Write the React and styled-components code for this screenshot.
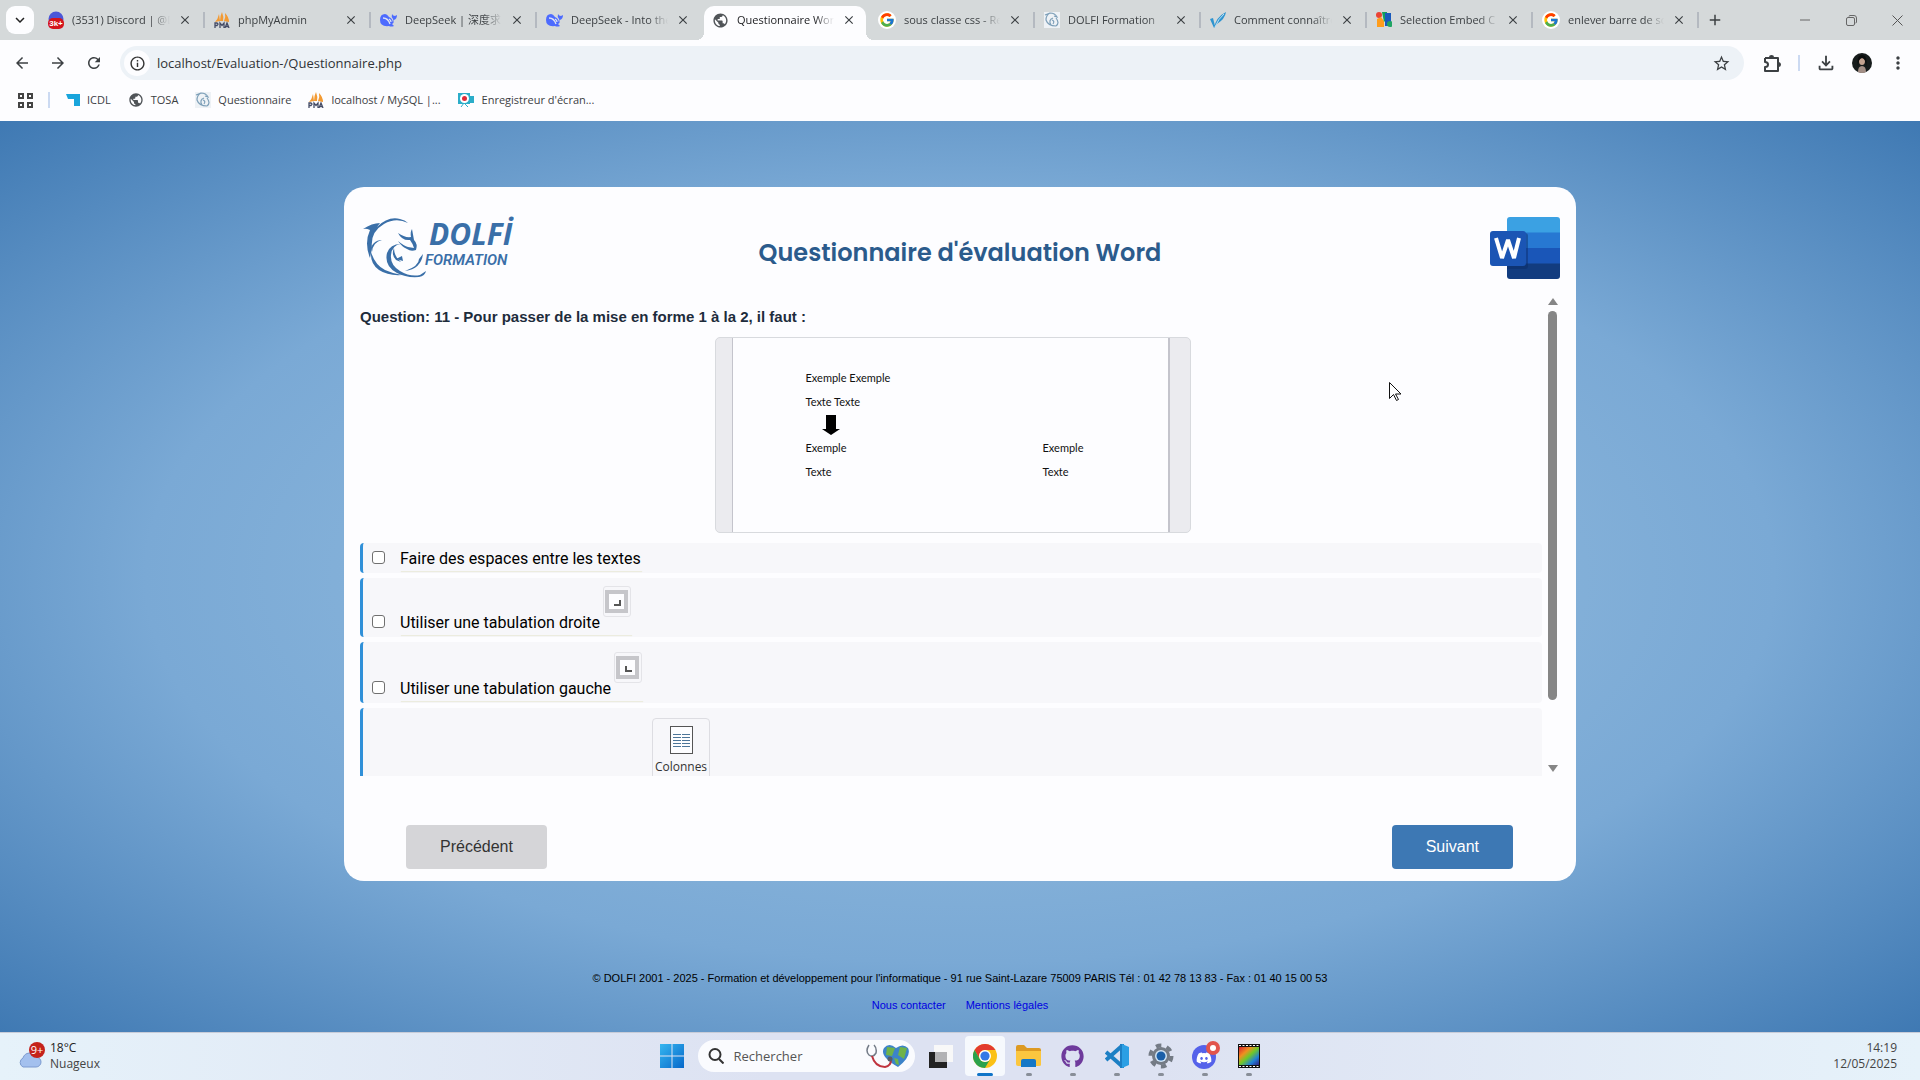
import React from 'react';
import styled, { createGlobalStyle, css } from 'styled-components';
import {
  MdArrowBack, MdArrowForward, MdRefresh, MdInfoOutline, MdStarBorder,
  MdOutlineFileDownload, MdMoreVert, MdClose, MdAdd, MdKeyboardArrowDown, MdPublic,
} from 'react-icons/md';
import { FcGoogle } from 'react-icons/fc';
import { FaDiscord, FaGithub } from 'react-icons/fa';

const ui = '"Open Sans", "Noto Sans", "Noto Sans CJK SC", sans-serif';
const arial = '"Liberation Sans", Arial, sans-serif';

const GlobalStyle = createGlobalStyle`
  * { box-sizing: border-box; }
  body { margin: 0; font-family: ${arial}; overflow: hidden; }
  button { border: 0; padding: 0; background: none; font: inherit; color: inherit; }
  a { text-decoration: none; }
  svg { display: block; flex: none; }
`;

const Shell = styled.div`
  min-height: 100vh;
  display: flex;
  flex-direction: column;
`;

/* ---------- browser ---------- */

const TabStrip = styled.div`
  height: 40px;
  display: flex;
  align-items: center;
  padding-left: 6px;
  background: #d5d9da;
  font: 11px/16px ${ui};
  color: #3c4043;
`;
const TabMenu = styled.button`
  width: 28px;
  height: 28px;
  margin-right: 4px;
  border-radius: 9px;
  background: #fdfdff;
  display: grid;
  place-items: center;
  color: #222;
`;
const Tab = styled.div`
  flex: 0 1 166px;
  min-width: 0;
  height: 40px;
  padding-top: 6px;
  display: flex;
  align-items: stretch;
`;
const TabBody = styled.div`
  position: relative;
  flex: 1;
  min-width: 0;
  display: flex;
  align-items: center;
  gap: 8px;
  margin: 0 2px;
  padding: 0 10px 6px 8px;
  ${p => p.$active && css`
    background: #fdfdff;
    border-radius: 10px 10px 0 0;
    color: #202124;
    &::before, &::after {
      content: '';
      position: absolute;
      bottom: 0;
      width: 8px;
      height: 8px;
    }
    &::before { left: -8px; background: radial-gradient(circle at 0 0, transparent 8px, #fdfdff 8px); }
    &::after { right: -8px; background: radial-gradient(circle at 100% 0, transparent 8px, #fdfdff 8px); }
  `}
`;
const TabTitle = styled.span`
  flex: 1;
  min-width: 0;
  overflow: hidden;
  white-space: nowrap;
  mask-image: linear-gradient(90deg, #000 80%, transparent 100%);
`;
const TabSeparator = styled.i`
  width: 2px;
  height: 16px;
  margin: 6px -1px 0;
  background: ${p => (p.$hidden ? 'transparent' : '#b4b9c0')};
`;
const IconButton = styled.button`
  display: grid;
  place-items: center;
  color: #3c4043;
`;
const NewTab = styled(IconButton)`
  width: 28px;
  height: 28px;
  margin-left: 3px;
`;
const WindowControls = styled.div`
  margin-left: auto;
  display: flex;
`;
const WindowButton = styled(IconButton)`
  width: 46px;
  height: 40px;
`;

const Toolbar = styled.div`
  height: 46px;
  display: flex;
  align-items: center;
  padding: 0 8px 0 10px;
  background: #fdfdff;
`;
const NavButtons = styled.div`
  display: flex;
  gap: 12px;
  padding: 0 14px 0 0;
  button { width: 24px; height: 28px; }
`;
const Omnibox = styled.label`
  flex: 1;
  height: 34px;
  margin-right: 14px;
  padding: 0 13px 0 4px;
  border-radius: 17px;
  background: #edf2f7;
  display: flex;
  align-items: center;
  gap: 7px;
`;
const SiteInfo = styled.span`
  width: 26px;
  height: 26px;
  border-radius: 50%;
  background: #fdfdff;
  display: grid;
  place-items: center;
  color: #333;
`;
const Address = styled.input`
  flex: 1;
  min-width: 0;
  border: 0;
  padding: 0;
  outline: 0;
  background: transparent;
  font: 13px/20px ${ui};
  color: #303236;
`;
const ToolbarActions = styled.div`
  display: flex;
  align-items: center;
  button { width: 28px; height: 28px; }
`;
const Rule = styled.i`
  width: 2px;
  height: 16px;
  background: #ccdaf2;
  margin: ${p => p.$margin || '0'};
`;
const ProfileButton = styled(IconButton)`
  margin: 0 8px;
`;
const BookmarkBar = styled.nav`
  height: 35px;
  display: flex;
  align-items: center;
  padding: 0 18px 7px;
  background: #fdfdff;
  font: 11px/16px ${ui};
`;
const Bookmarks = styled.div`
  display: flex;
  gap: 17px;
`;
const Bookmark = styled.a`
  display: flex;
  align-items: center;
  gap: 7px;
  color: #3c4043;
`;

/* ---------- questionnaire ---------- */

const Page = styled.main`
  flex: 1;
  display: flex;
  flex-direction: column;
  align-items: center;
  padding: 66px 24px 19px;
  background: radial-gradient(ellipse farthest-corner at center,
    #9cc3e2 0%, #7aa9d5 60%, #3f79b3 100%);
`;
const Card = styled.section`
  position: relative;
  width: 100%;
  max-width: 1232px;
  padding: 16px 16px 12px;
  border-radius: 20px;
  background: #fdfdff;
`;
const CardHeader = styled.header`
  display: grid;
  grid-template-columns: 1fr auto 1fr;
  align-items: center;
  height: 90px;
`;
const Title = styled.h1`
  margin: 10px 0 0;
  font: 600 24px/36px Poppins, Inter, sans-serif;
  color: #2b5b8c;
`;
const WordSlot = styled.div`
  justify-self: end;
`;
const ScrollArea = styled.div`
  display: flex;
  height: 483px;
  overflow: hidden;
`;
const ScrollContent = styled.div`
  flex: 1;
  min-width: 0;
  padding-top: 13px;
`;
const Question = styled.h2`
  margin: 0 0 9px;
  font: bold 15px/22px ${arial};
  color: #1e2c3c;
`;
const ScrollTrack = styled.div`
  width: 15px;
  display: flex;
  flex-direction: column;
  align-items: center;
  padding: 5px 0 4px;
`;
const Thumb = styled.i`
  width: 9px;
  height: 389px;
  margin-top: 6px;
  border-radius: 5px;
  background: #868686;
`;
const ScrollArrow = styled.i`
  border: 5px solid transparent;
  border-top: ${p => (p.$down ? '7px solid #868686' : '0')};
  border-bottom: ${p => (p.$down ? '0' : '7px solid #868686')};
  margin-top: ${p => (p.$down ? 'auto' : '0')};
`;
const Figure = styled.figure`
  width: 476px;
  height: 196px;
  margin: 0 auto 10px;
  padding: 0 20px 0 16px;
  border: 1px solid #d8dade;
  border-radius: 5px;
  background: #ebebef;
`;
const Sheet = styled.div`
  height: 100%;
  padding: 28px 70px 0 73px;
  border: solid #c4c4cc;
  border-width: 0 2px 0 1px;
  background: #fdfdff;
  font: 11px/24px Lato, sans-serif;
  color: #111;
`;
const SheetLine = styled.div`
  display: grid;
  grid-template-columns: 237px 1fr;
  height: ${p => (p.$arrow ? 22 : 24)}px;
  ${p => p.$arrow && 'padding-left: 16px; align-items: center;'}
`;
const Options = styled.ul`
  list-style: none;
  margin: 0 3px 0 0;
  padding: 0;
  display: grid;
  gap: 5px;
`;
const Option = styled.li`
  height: ${p => p.$height}px;
  padding: 0 0 2px 9px;
  display: flex;
  align-items: flex-end;
  border-left: 3px solid #3090d8;
  border-radius: 4px;
  background: #f7f7fa;
  font: 16px/24px Roboto, sans-serif;
  color: #000;
`;
const Check = styled.input`
  appearance: none;
  width: 13px;
  height: 13px;
  margin: 0 15px 7px 0;
  border: 1px solid #707070;
  border-radius: 3px;
  background: #fff;
`;
const OptionLabel = styled.label`
  display: flex;
  align-items: flex-end;
  gap: 3px;
  padding-right: 2px;
  box-shadow: 0 2px 1px -1px #ececdf;
`;
const TabMark = styled.span`
  width: 28px;
  height: 31px;
  margin-bottom: 18px;
  padding: 3px 0 0 1px;
  border: 1px solid #e4e4e8;
  border-radius: 3px;
`;
const ColumnsTool = styled.div`
  align-self: flex-start;
  width: 58px;
  height: 90px;
  margin: 10px 0 0 280px;
  padding-top: 7px;
  border: 1px solid #dddde2;
  border-radius: 4px;
  display: flex;
  flex-direction: column;
  align-items: center;
  gap: 5px;
  font: 12px/16px ${ui};
  color: #333;
`;
const Actions = styled.div`
  display: flex;
  justify-content: space-between;
  padding: 49px 47px 0 46px;
`;
const Action = styled.button`
  height: 44px;
  padding: 0 34px;
  border-radius: 4px;
  font: 16px/24px ${arial};
  background: ${p => (p.$primary ? '#3d78b4' : '#d5d5d8')};
  color: ${p => (p.$primary ? '#fff' : '#333')};
`;
const Pointer = styled.svg`
  position: absolute;
  left: 1045px;
  top: 195px;
`;
const Footer = styled.footer`
  margin-top: auto;
  text-align: center;
  font: 11px/16px ${arial};
  color: #000;
`;
const FooterLinks = styled.div`
  display: flex;
  justify-content: center;
  gap: 20px;
  margin-top: 11px;
  a { color: #0000e0; }
`;

/* ---------- taskbar ---------- */

const Taskbar = styled.footer`
  height: 48px;
  display: grid;
  grid-template-columns: 1fr auto 1fr;
  align-items: center;
  padding: 0 23px 1px;
  border-top: 1px solid #c8ccd8;
  background: linear-gradient(90deg, #e6f2fa, #dde2f2 40%, #dde2f2 60%, #e6f2fa);
  font: 12px/16px ${ui};
  color: #444;
`;
const Weather = styled.div`
  display: flex;
  align-items: center;
  gap: 5px;
  margin-left: -6px;
  strong { display: block; font-weight: 400; color: #222; }
`;
const Apps = styled.div`
  display: flex;
  align-items: center;
`;
const Search = styled.label`
  width: 217px;
  height: 32px;
  margin: 0 4px 0 4px;
  padding: 0 5px 0 10px;
  border-radius: 16px;
  background: #fafbfe;
  display: flex;
  align-items: center;
  gap: 10px;
  input {
    flex: 1;
    min-width: 0;
    border: 0;
    padding: 0;
    outline: 0;
    background: transparent;
    font: 13px/20px ${ui};
    color: #555;
  }
  input::placeholder { color: #555; opacity: 1; }
`;
const AppButton = styled.button`
  position: relative;
  width: 40px;
  height: 40px;
  margin: 0 2px;
  border-radius: 4px;
  display: grid;
  place-items: center;
  background: ${p => (p.$active ? '#f6f9fd' : 'transparent')};
  &::after {
    content: '';
    position: absolute;
    bottom: 0;
    left: 50%;
    translate: -50%;
    width: ${p => (p.$active ? 16 : 6)}px;
    height: 3px;
    border-radius: 2px;
    background: ${p => (p.$active ? '#0f74c8' : p.$open ? '#888e98' : 'transparent')};
  }
`;
const Clock = styled.div`
  text-align: right;
`;

/* ---------- drawings ---------- */

const PmaIcon = () => (
  <svg width="16" height="16" viewBox="0 0 16 16">
    <path d="M1 10 Q4 7 5 2 L6 9Z M6 9 Q6 4 8 0 Q10 5 9 9Z M10 9 Q12 5 11 1 Q15 5 15 10Z" fill="#f39a32" />
    <path d="M1 16V11h2l1 1-1 1.5H1M6 16v-5l2 2.500 2-2.500V16M11 16l2-5 2 5M12 14.500h2.500" stroke="#454c66" strokeWidth="1.300" fill="none" />
  </svg>
);
const WhaleIcon = () => (
  <svg width="17" height="16" viewBox="0 0 17 16">
    <path d="M0 8Q0 2 5 2q2 0 4 3 3 1 4 5 1-1 0-3-2-2-1-5 1 2 3 2l2-1q0 4-3 5 0 3-2 4l2 2q-3 1-5 0-9 1-9-6Z" fill="#4d6bfe" />
    <path d="M3 6q5 0 7 6M9 7q2 1 2 3" stroke="#dfe4f4" strokeWidth="1.300" fill="none" />
  </svg>
);
const DiscordBadge = () => (
  <svg width="16" height="18" viewBox="0 0 16 18">
    <circle cx="8" cy="8" r="7.500" fill="#4b57d8" />
    <rect x="0" y="7" width="16" height="11" rx="5" fill="#d4141c" />
    <text x="8" y="15" textAnchor="middle" fontFamily="Liberation Sans" fontSize="8" fontWeight="700" fill="#fff">3k+</text>
  </svg>
);
const FinIcon = () => (
  <svg width="16" height="16" viewBox="0 0 16 16">
    <path d="M0 0h16v16H0z" fill="#eef2f6" />
    <path d="M1 3l5-2q-4 2-4 7 2 6 10 6M6 1q5 0 7 4l-3-1M9 6q-5 2-2 7M12 6q4 5 0 8M8 8q3 1 1 4" stroke="#7d9fb8" strokeWidth="1.200" fill="none" />
  </svg>
);
const FeatherIcon = () => (
  <svg width="16" height="16" viewBox="0 0 16 16">
    <path d="M4 16Q6 5 16 0q-1 7-9 12ZM0 7l3-1 2 8-1 2Z" fill="#2f94cf" /><path d="M5 15Q8 7 14 2" stroke="#bfe2f5" fill="none" />
  </svg>
);
const EmbedIcon = () => (
  <svg width="16" height="16" viewBox="0 0 16 16">
    <circle cx="3" cy="3" r="3" fill="#ea4335" /><path d="M1 7l4-2 3 4v6H1z" fill="#ff9d1c" />
    <path d="M6 0h5v7l-3 3z" fill="#12a05c" /><path d="M9 1h6v13H9z" fill="#185abc" /><circle cx="14" cy="12" r="3" fill="#21a563" />
  </svg>
);
const GoogleIcon = () => (
  <svg width="18" height="18" viewBox="0 0 18 18"><circle cx="9" cy="9" r="9" fill="#fff" /><g transform="translate(1 1)"><FcGoogle size={16} /></g></svg>
);
const PuzzleIcon = () => (
  <svg width="18" height="19" viewBox="0 0 18 19" fill="none" stroke="#3c4043" strokeWidth="2">
    <path d="M2 4h13v5M15 12v5H2v-4q3 0 3-2.500T2 8V4" strokeLinejoin="round" />
    <path d="M6 3q0-2 2.500-2T11 3ZM16 8q2 .500 2 2.500T16 13Z" fill="#3c4043" stroke="none" />
    <path d="M15 8v5" />
  </svg>
);
const GridIcon = () => (
  <svg width="15" height="15" viewBox="0 0 15 15" fill="none" stroke="#444" strokeWidth="2">
    <path d="M1 1h4v4H1zM10 1h4v4h-4zM1 10h4v4H1zM10 10h4v4h-4z" />
  </svg>
);
const IcdlIcon = () => (
  <svg width="14" height="14" viewBox="0 0 14 14"><path d="M0 1h14v12H8V6H2z" fill="#19a5dc" /></svg>
);
const RecorderIcon = () => (
  <svg width="17" height="16" viewBox="0 0 17 16">
    <path d="M0 1h12v11H0zM12 4h4v7h-4z" fill="#2badc9" /><path d="M3 15l3-4 4 4" stroke="#2badc9" fill="none" />
    <circle cx="6.500" cy="6.500" r="4.500" fill="#fff" /><circle cx="6.500" cy="6.500" r="2.500" fill="#e02b38" />
  </svg>
);
const Avatar = () => (
  <svg width="20" height="20" viewBox="0 0 20 20">
    <circle cx="10" cy="10" r="10" fill="#171c1c" /><ellipse cx="10" cy="8" rx="3" ry="4" fill="#c4a391" />
    <path d="M6 19q0-6 4-6t4 6q-4 2-8 0Z" fill="#a38f86" /><path d="M6 14Q4 2 10 2t4 12q0-8-4-9-4 1-4 9Z" fill="#0b0d0d" />
  </svg>
);
const MinimiseIcon = () => <svg width="10" height="10"><path d="M0 5h10" stroke="#666" /></svg>;
const RestoreIcon = () => (
  <svg width="11" height="11" fill="none" stroke="#666"><rect x=".5" y="2.500" width="8" height="8" rx="1.500" /><path d="M3 1.500q0-1 1-1h4q2.500 0 2.500 2.500v4q0 1-1 1" /></svg>
);
const CrossIcon = () => <svg width="11" height="11"><path d="M.5.5l10 10M10.500.5l-10 10" stroke="#555" /></svg>;

const DolfiLogo = () => (
  <svg width="154" height="66" viewBox="0 0 154 66" role="img" aria-label="DOLFI Formation">
    <g fill="#3a6fa8">
      <path d="M3 14Q12 8 20 8l-3 4Q28 1 40 4q5 1 8 4Q36 2 24 9 10 17 12 33l-2 10Q4 28 10 15Q6 13 3 14Z" />
      <path d="M38 18q7 5 13 4-1-5 1-8l2 11q4 4 2 10-5 2-9-1-6-3-9-8 6 5 10 6l6 1q-1-4-4-8-8 1-12-7Z" />
      <path d="M41 29q-9 1-10 11t9 16q10 6 20 4l6-4q-1 5-7 6-13 1-22-4-13-7-10-20 3-9 14-9Z" />
      <path d="M11 37q4 13 14 18 9 4 17 5-14 1-23-5T11 37Z" />
      <path d="M22 25q-9 2-10 12-2-6 2-9 3-3 8-3ZM34 33q0 9 7 14l-5-2q-5-5-2-12ZM63 39q-2 15-18 17 14-5 14-12Z" />
      <path d="M36 44l7 2-1-5Z" />
    </g>
    <g fill="#3a6fa8" fontStyle="italic">
      <text x="69" y="30" fontSize="30" fontWeight="700" fontFamily="Open Sans, sans-serif">DOLFİ</text>
      <text x="65" y="50" fontSize="15" fontWeight="600" fontFamily="Roboto, sans-serif">FORMATION</text>
    </g>
  </svg>
);
const WordLogo = () => (
  <svg width="70" height="62" viewBox="0 0 70 62" role="img" aria-label="Word">
    <defs><clipPath id="sheet"><rect x="17" width="53" height="62" rx="3" /></clipPath></defs>
    <g clipPath="url(#sheet)">
      <path d="M17 0h53v16H17z" fill="#3ba1e3" /><path d="M17 15.500h53V31H17z" fill="#2778d2" />
      <path d="M17 31h53v16H17z" fill="#1a56b8" /><path d="M17 46.500h53V62H17z" fill="#123c7f" />
      <path d="M17 16h18q3 0 3 3v30q0 3-3 3H17z" fill="#0a2a66" opacity=".45" />
    </g>
    <rect y="14" width="36" height="35" rx="3" fill="#1b55b4" />
    <path d="M6 21l6 20 6-18 6 18 5-20" fill="none" stroke="#fff" strokeWidth="4" strokeLinejoin="bevel" />
  </svg>
);
const DownArrow = () => <svg width="18" height="20"><path d="M4 0h10v14h4l-9 6-9-6h4z" fill="#000" /></svg>;
const TabStop = ({ left }) => (
  <svg width="23" height="23" viewBox="0 0 23 23">
    <rect x="2" y="2" width="19" height="19" fill="#fdfdff" stroke="#c6c6ca" strokeWidth="4" />
    <path d={left ? 'M10 10v5h6' : 'M15 10v5H9'} fill="none" stroke="#555" strokeWidth="2" />
  </svg>
);
const ColumnsIcon = () => (
  <svg width="23" height="28" viewBox="0 0 23 28">
    <rect x=".5" y=".5" width="22" height="27" fill="#fdfdff" stroke="#555" />
    <path d="M3 8.500h8M12 8.500h8M3 11.500h8M12 11.500h8M3 14.500h8M12 14.500h8M3 17.500h8M12 17.500h8M3 20.500h8M12 20.500h8" stroke="#4c7599" />
  </svg>
);

const WeatherIcon = () => (
  <svg width="28" height="28" viewBox="0 0 28 28">
    <path d="M6 25a5 5 0 0 1 0-9 7 7 0 0 1 13-1 5 5 0 0 1 0 10Z" fill="#a3c0ee" stroke="#7c9bd0" />
    <circle cx="20" cy="8" r="8" fill="#c5221b" />
    <text x="20" y="12" textAnchor="middle" fontSize="11" fontFamily="Open Sans" fill="#fff">9+</text>
  </svg>
);
const WindowsIcon = () => (
  <svg width="24" height="24"><defs><linearGradient id="win" x2="1" y2="1"><stop stopColor="#35b6f0" /><stop offset="1" stopColor="#0768ca" /></linearGradient></defs>
    <path d="M0 0h11.500v11.500H0zM12.500 0H24v11.500H12.500zM0 12.500h11.500V24H0zM12.500 12.500H24V24H12.500z" fill="url(#win)" /></svg>
);
const SearchIcon = () => (
  <svg width="16" height="16" fill="none" stroke="#333" strokeWidth="2"><circle cx="7" cy="6.500" r="5.500" /><path d="M11 11l4.500 4.500" /></svg>
);
const HealthIcon = () => (
  <svg width="44" height="26" viewBox="0 0 44 26">
    <path d="M32 24Q13 13 18 5q5-6 12 0 7-5 12 0 4 8-10 19Z" fill="#3c83c9" />
    <path d="M21 4l8 1-3 8-6-1ZM34 4l7 1-3 11-6-4ZM28 15l4 1 1 6-3-1Z" fill="#6fb34a" />
    <path d="M3 2Q-1 8 3 12q4 3 7-2 1-5-2-8" fill="none" stroke="#747c88" strokeWidth="1.500" />
    <path d="M6 13q3 11 13 11 6-1 6-7" fill="none" stroke="#c0343f" strokeWidth="2" />
    <circle cx="24" cy="16" r="2.500" fill="#555d68" />
  </svg>
);
const TaskViewIcon = () => (
  <svg width="24" height="24"><path d="M5 1h19v17H5z" fill="#f8f8f8" /><path d="M0 8h6v10h12v6H0z" fill="#222" /><path d="M6 8h12v10H6z" fill="#b2b2b4" /></svg>
);
const ChromeIcon = () => (
  <svg width="24" height="24" viewBox="0 0 24 24">
    <circle cx="12" cy="12" r="12" fill="#fbc116" />
    <path d="M1.600 6A12 12 0 0 1 22.400 6H12A6 6 0 0 0 6.800 15Z" fill="#e33b2e" />
    <path d="M1.600 6A12 12 0 0 0 12 24L17.200 15A6 6 0 0 1 6.800 15Z" fill="#2ba24c" />
    <circle cx="12" cy="12" r="6" fill="#fff" /><circle cx="12" cy="12" r="4.600" fill="#3278e6" />
  </svg>
);
const FolderIcon = () => (
  <svg width="26" height="24"><path d="M0 3q0-2 2-2h6l3 3h12q2 0 2 2v4H0z" fill="#dd9a22" /><path d="M0 7h25v14q0 1-2 1H2q-2 0-2-2z" fill="#fbc63f" /><path d="M5 17q0-2 2-2h11q2 0 2 2v6H5z" fill="#1577c6" /></svg>
);
const CodeIcon = () => (
  <svg width="24" height="24" viewBox="0 0 24 24">
    <path d="M17 0v24M18 1L1 16M18 23L1 8" stroke="#1c7fc4" strokeWidth="4" fill="none" />
    <path d="M17 0l7 3v18l-7 3Z" fill="#2b9fe4" />
  </svg>
);
const GearIcon = () => (
  <svg width="26" height="26" viewBox="0 0 26 26">
    <circle cx="13" cy="13" r="9" fill="#747b85" /><circle cx="13" cy="13" r="10.500" fill="none" stroke="#747b85" strokeWidth="4" strokeDasharray="5.500 5.500" />
    <circle cx="13" cy="13" r="6" fill="#cfe4f5" /><circle cx="13" cy="13" r="4.500" fill="#1a5fa8" />
  </svg>
);
const DiscordApp = () => (
  <svg width="30" height="30" viewBox="0 0 30 30">
    <circle cx="14" cy="16" r="12" fill="#5562ea" /><g transform="translate(6 9)"><FaDiscord size={16} color="#fff" /></g>
    <circle cx="23" cy="7" r="7" fill="#e2544c" /><circle cx="23" cy="7" r="3" fill="#fff" />
  </svg>
);
const FilmIcon = () => (
  <svg width="22" height="24"><defs><linearGradient id="film" x2="1" y2="1"><stop stopColor="#d8202c" /><stop offset=".3" stopColor="#f09020" /><stop offset=".5" stopColor="#70c828" /><stop offset=".75" stopColor="#2080d8" /><stop offset="1" stopColor="#302080" /></linearGradient></defs>
    <path d="M0 0h22v24H0z" fill="#111" /><path d="M1 3h20v18H1z" fill="url(#film)" /><path d="M1 1.500h20M1 22.500h20" stroke="#fff" strokeDasharray="2 1.500" /></svg>
);

/* ---------- data ---------- */

const tabs = [
  { title: '(3531) Discord | @Dolfi', icon: <DiscordBadge /> },
  { title: 'phpMyAdmin', icon: <PmaIcon /> },
  { title: 'DeepSeek | 深度求', icon: <WhaleIcon /> },
  { title: 'DeepSeek - Into the', icon: <WhaleIcon /> },
  { title: 'Questionnaire Word', icon: <MdPublic size={17} color="#505458" />, active: true },
  { title: 'sous classe css - Re', icon: <GoogleIcon /> },
  { title: 'DOLFI Formation', icon: <FinIcon /> },
  { title: 'Comment connaître', icon: <FeatherIcon /> },
  { title: 'Selection Embed C', icon: <EmbedIcon /> },
  { title: 'enlever barre de scr', icon: <GoogleIcon /> },
];
const bookmarks = [
  { title: 'ICDL', icon: <IcdlIcon /> },
  { title: 'TOSA', icon: <MdPublic size={16} color="#505458" /> },
  { title: 'Questionnaire', icon: <FinIcon /> },
  { title: 'localhost / MySQL |...', icon: <PmaIcon /> },
  { title: "Enregistreur d'écran...", icon: <RecorderIcon /> },
];
const options = [
  { id: 'espaces', text: 'Faire des espaces entre les textes', height: 30 },
  { id: 'droite', text: 'Utiliser une tabulation droite', height: 59, mark: <TabStop /> },
  { id: 'gauche', text: 'Utiliser une tabulation gauche', height: 61, mark: <TabStop left /> },
];
const apps = [
  { name: 'Bureaux', icon: <TaskViewIcon /> },
  { name: 'Chrome', icon: <ChromeIcon />, active: true },
  { name: 'Explorateur', icon: <FolderIcon />, open: true },
  { name: 'GitHub', icon: <FaGithub size={23} color="#6e3a9c" />, open: true },
  { name: 'Code', icon: <CodeIcon />, open: true },
  { name: 'Paramètres', icon: <GearIcon />, open: true },
  { name: 'Discord', icon: <DiscordApp />, open: true },
  { name: 'Film', icon: <FilmIcon />, open: true },
];

export default function App() {
  return (
    <Shell>
      <GlobalStyle />
      <TabStrip>
        <TabMenu aria-label="Onglets"><MdKeyboardArrowDown size={18} /></TabMenu>
        {tabs.map((tab, i) => (
          <Tab key={i}>
            <TabBody $active={tab.active}>
              {tab.icon}
              <TabTitle>{tab.title}</TabTitle>
              <IconButton aria-label="Fermer"><MdClose size={14} /></IconButton>
            </TabBody>
            <TabSeparator $hidden={tab.active || (tabs[i + 1] && tabs[i + 1].active)} />
          </Tab>
        ))}
        <NewTab aria-label="Nouvel onglet"><MdAdd size={18} /></NewTab>
        <WindowControls>
          <WindowButton aria-label="Réduire"><MinimiseIcon /></WindowButton>
          <WindowButton aria-label="Restaurer"><RestoreIcon /></WindowButton>
          <WindowButton aria-label="Fermer la fenêtre"><CrossIcon /></WindowButton>
        </WindowControls>
      </TabStrip>

      <Toolbar>
        <NavButtons>
          <IconButton aria-label="Retour"><MdArrowBack size={18} /></IconButton>
          <IconButton aria-label="Avancer"><MdArrowForward size={18} /></IconButton>
          <IconButton aria-label="Actualiser"><MdRefresh size={18} /></IconButton>
        </NavButtons>
        <Omnibox>
          <SiteInfo><MdInfoOutline size={17} /></SiteInfo>
          <Address aria-label="Adresse" defaultValue="localhost/Evaluation-/Questionnaire.php" />
          <MdStarBorder size={19} color="#3c4043" />
        </Omnibox>
        <ToolbarActions>
          <IconButton aria-label="Extensions"><PuzzleIcon /></IconButton>
          <Rule $margin="0 12px 0 12px" />
          <IconButton aria-label="Téléchargements"><MdOutlineFileDownload size={22} /></IconButton>
          <ProfileButton aria-label="Profil"><Avatar /></ProfileButton>
          <IconButton aria-label="Menu"><MdMoreVert size={20} /></IconButton>
        </ToolbarActions>
      </Toolbar>
      <BookmarkBar>
        <GridIcon />
        <Rule $margin="0 16px 0 15px" />
        <Bookmarks>
          {bookmarks.map(b => <Bookmark key={b.title} href="#">{b.icon}{b.title}</Bookmark>)}
        </Bookmarks>
      </BookmarkBar>

      <Page>
        <Card>
          <CardHeader>
            <DolfiLogo />
            <Title>Questionnaire d'évaluation Word</Title>
            <WordSlot><WordLogo /></WordSlot>
          </CardHeader>
          <ScrollArea>
            <ScrollContent>
              <Question>Question: 11 - Pour passer de la mise en forme 1 à la 2, il faut :</Question>
              <Figure>
                <Sheet>
                  <SheetLine><span>Exemple Exemple</span></SheetLine>
                  <SheetLine><span>Texte Texte</span></SheetLine>
                  <SheetLine $arrow><DownArrow /></SheetLine>
                  <SheetLine><span>Exemple</span><span>Exemple</span></SheetLine>
                  <SheetLine><span>Texte</span><span>Texte</span></SheetLine>
                </Sheet>
              </Figure>
              <Options>
                {options.map(o => (
                  <Option key={o.id} $height={o.height}>
                    <Check type="checkbox" id={o.id} />
                    <OptionLabel htmlFor={o.id}>{o.text}{o.mark && <TabMark>{o.mark}</TabMark>}</OptionLabel>
                  </Option>
                ))}
                <Option $height={110}>
                  <ColumnsTool><ColumnsIcon />Colonnes</ColumnsTool>
                </Option>
              </Options>
            </ScrollContent>
            <ScrollTrack>
              <ScrollArrow />
              <Thumb />
              <ScrollArrow $down />
            </ScrollTrack>
          </ScrollArea>
          <Actions>
            <Action>Précédent</Action>
            <Action $primary>Suivant</Action>
          </Actions>
          <Pointer width="13" height="20" viewBox="0 0 13 20">
            <path d="M.5.5v16l4-4 3 6 2-1-3-5.500h5.500Z" fill="#fff" stroke="#111" />
          </Pointer>
        </Card>
        <Footer>
          <div>© DOLFI 2001 - 2025 - Formation et développement pour l'informatique - 91 rue Saint-Lazare 75009 PARIS Tél : 01 42 78 13 83 - Fax : 01 40 15 00 53</div>
          <FooterLinks><a href="#contact">Nous contacter</a><a href="#legal">Mentions légales</a></FooterLinks>
        </Footer>
      </Page>

      <Taskbar>
        <Weather><WeatherIcon /><div><strong>18°C</strong>Nuageux</div></Weather>
        <Apps>
          <AppButton aria-label="Démarrer"><WindowsIcon /></AppButton>
          <Search><SearchIcon /><input aria-label="Rechercher" placeholder="Rechercher" /><HealthIcon /></Search>
          {apps.map(a => <AppButton key={a.name} aria-label={a.name} $active={a.active} $open={a.open}>{a.icon}</AppButton>)}
        </Apps>
        <Clock>14:19<br />12/05/2025</Clock>
      </Taskbar>
    </Shell>
  );
}
